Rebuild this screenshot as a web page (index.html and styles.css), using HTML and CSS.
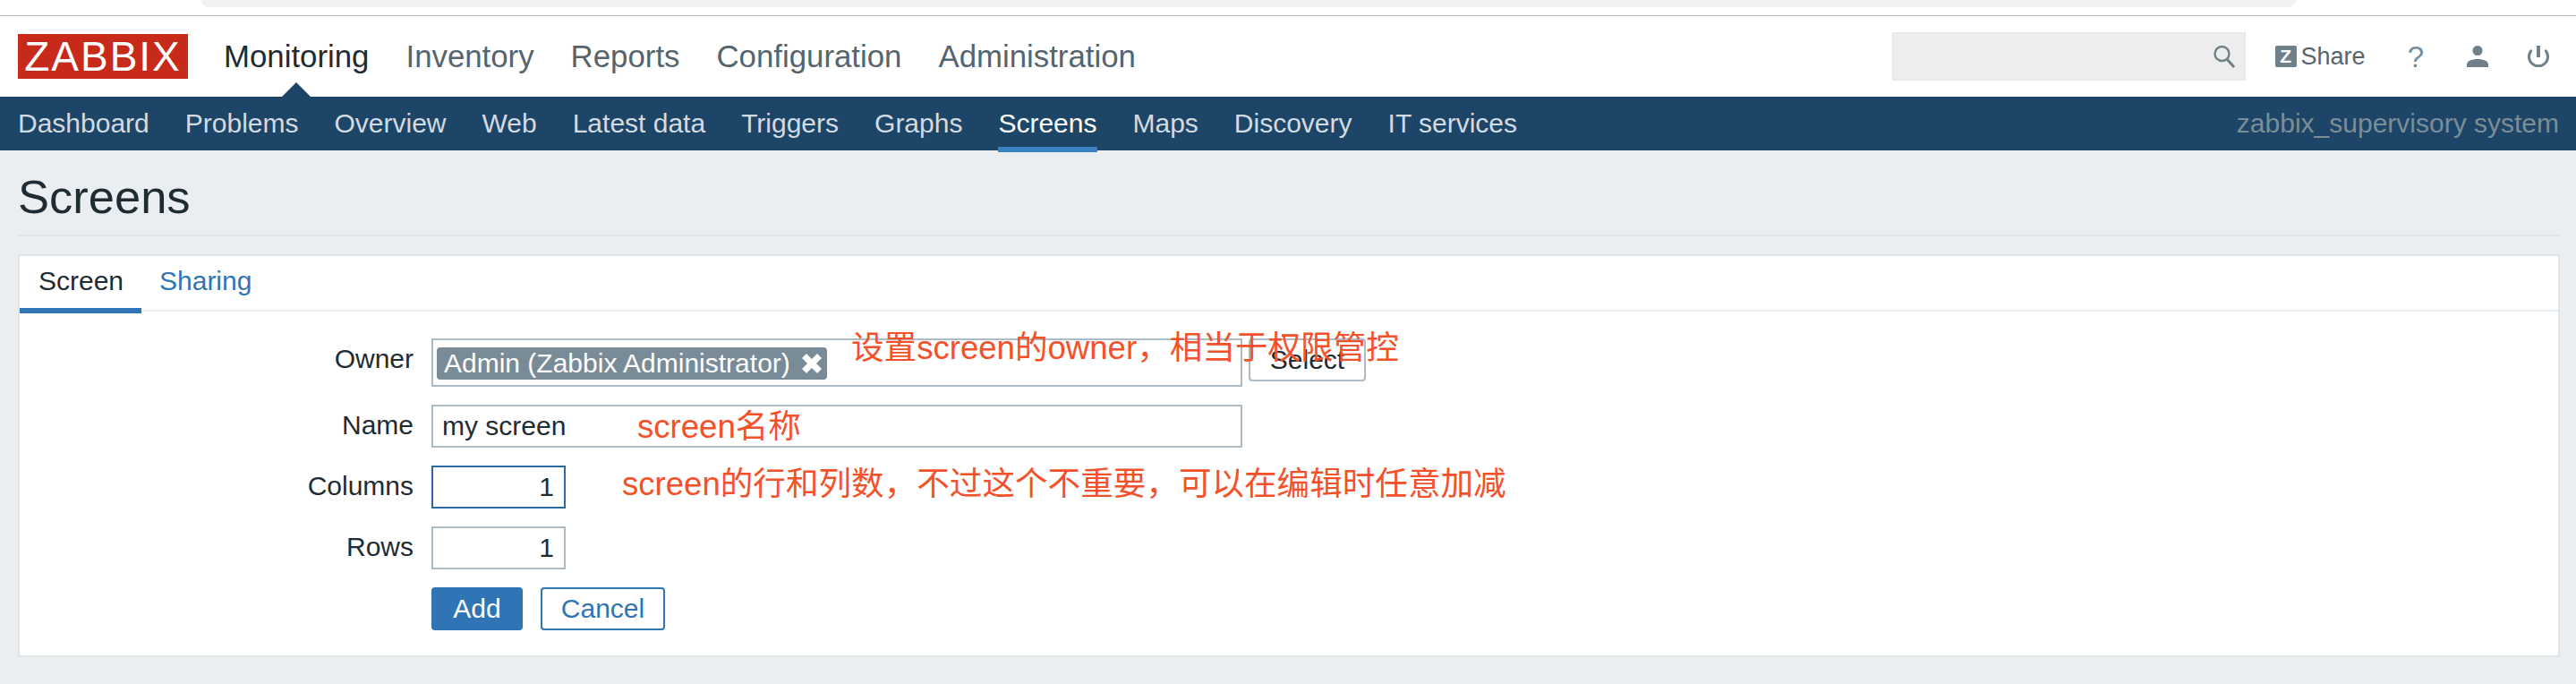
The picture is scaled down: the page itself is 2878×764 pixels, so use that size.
FILE: index.html
```html
<!DOCTYPE html>
<html lang="en">
<head>
    <meta charset="UTF-8">
    <meta name="viewport" content="width=device-width, initial-scale=1.0">
    <title>Screens</title>
    <link rel="stylesheet" href="styles.css">
</head>
<body>
<div class="browser-strip"><div class="browser-pill"></div></div>
<header class="top-bar">
    <a class="logo">ZABBIX</a>
    <nav class="main-nav">
        <a class="active">Monitoring</a>
        <a>Inventory</a>
        <a>Reports</a>
        <a>Configuration</a>
        <a>Administration</a>
    </nav>
    <div class="top-tools">
        <div class="search-box">
            <svg class="search-icon" width="26" height="26" viewBox="0 0 26 26">
                <circle cx="10.5" cy="10" r="8" fill="none" stroke="#6f808b" stroke-width="2.4"/>
                <path d="M16 16 L24 25" fill="none" stroke="#6f808b" stroke-width="3"/>
            </svg>
        </div>
        <a class="share-link">
            <span class="share-z">Z</span>
            <span>Share</span>
        </a>
        <a class="help-link">?</a>
        <svg class="tool-icon" width="24" height="24" viewBox="0 0 24 24">
            <circle cx="12" cy="5.5" r="5.5" fill="#6f808b"/>
            <path d="M0 24 V21 C0 17 6 15 12 15 C18 15 24 17 24 21 V24 Z" fill="#6f808b"/>
        </svg>
        <svg class="tool-icon" width="24" height="24" viewBox="0 0 24 24">
            <path d="M4.5 5 A10.5 10.5 0 1 0 19.5 5" fill="none" stroke="#6f808b" stroke-width="3"/>
            <path d="M12 0 V13" fill="none" stroke="#6f808b" stroke-width="4"/>
        </svg>
    </div>
</header>
<nav class="sub-nav">
    <a>Dashboard</a>
    <a>Problems</a>
    <a>Overview</a>
    <a>Web</a>
    <a>Latest data</a>
    <a>Triggers</a>
    <a>Graphs</a>
    <a class="active">Screens</a>
    <a>Maps</a>
    <a>Discovery</a>
    <a>IT services</a>
    <span class="server-name">zabbix_supervisory system</span>
</nav>
<main class="page">
    <div class="page-title"><h1>Screens</h1></div>
    <section class="card">
        <div class="tabs">
            <a class="tab active">Screen</a>
            <a class="tab">Sharing</a>
        </div>
        <form class="screen-form">
            <label>Owner</label>
            <div class="owner-row">
                <div class="multiselect">
                    <span class="tag">Admin (Zabbix Administrator)
                        <svg width="22" height="22" viewBox="0 0 22 22">
                            <path d="M2.5 2.5 L19.5 19.5 M19.5 2.5 L2.5 19.5" fill="none" stroke="#fff" stroke-width="7"/>
                        </svg>
                    </span>
                </div>
                <button type="button" class="btn-select">Select</button>
            </div>
            <label>Name</label>
            <input class="input-wide" type="text" value="my screen">
            <label>Columns</label>
            <input class="input-num focused" type="text" value="1">
            <label>Rows</label>
            <input class="input-num" type="text" value="1">
            <div class="form-buttons">
                <button type="button" class="btn-add">Add</button>
                <button type="button" class="btn-cancel">Cancel</button>
            </div>
        </form>
        <span class="note note-owner">设置screen的owner，相当于权限管控</span>
        <span class="note note-name">screen名称</span>
        <span class="note note-size">screen的行和列数，不过这个不重要，可以在编辑时任意加减</span>
    </section>
</main>
</body>
</html>
```

FILE: styles.css
```css
* {
    box-sizing: border-box;
}

body {
    font-family: "Liberation Sans", Arial, sans-serif;
    font-size: 30px;
    background-color: #ebeef0;
    color: #1f2c33;
    margin: 0;
    padding: 0;
}

.browser-strip {
    height: 18px;
    background-color: #fff;
    border-bottom: 1px solid #b8b8b8;
}

.browser-pill {
    height: 8px;
    margin: 0 313px 0 225px;
    background-color: #f1f2f4;
    border-radius: 0 0 16px 16px;
}

.top-bar {
    display: flex;
    align-items: center;
    height: 90px;
    padding: 0 30px 0 20px;
    background-color: #fff;
}

.logo {
    width: 190px;
    height: 50px;
    line-height: 50px;
    text-align: center;
    font-size: 46px;
    letter-spacing: 2px;
    color: #fff;
    background-color: #c7291b;
}

.main-nav {
    display: flex;
    gap: 41px;
    margin-left: 40px;
    font-size: 34.8px;
    color: #56646e;
}

.main-nav a {
    position: relative;
}

.main-nav a.active {
    color: #1f2c33;
}

.main-nav a.active::after {
    content: "";
    position: absolute;
    left: 50%;
    top: 49px;
    margin-left: -16px;
    border-left: 16px solid transparent;
    border-right: 16px solid transparent;
    border-bottom: 16px solid #1c4567;
}

.top-tools {
    display: flex;
    align-items: center;
    margin-left: auto;
}

.search-box {
    display: flex;
    align-items: center;
    justify-content: flex-end;
    width: 395px;
    height: 54px;
    padding-right: 9px;
    background-color: #ededed;
    border: 2px solid #e9e9e9;
}

.share-link {
    display: flex;
    align-items: center;
    gap: 5px;
    margin-left: 33px;
    font-size: 27px;
    color: #56646e;
}

.share-z {
    width: 24px;
    height: 24px;
    line-height: 24px;
    text-align: center;
    font-size: 21px;
    font-weight: bold;
    color: #fff;
    background-color: #6f808b;
    border-radius: 2px;
}

.help-link {
    margin-left: 47px;
    font-size: 33px;
    line-height: 33px;
    color: #768d99;
}

.tool-icon {
    margin-left: 48px;
}

.tool-icon:last-child {
    margin-left: 44px;
}

.sub-nav {
    display: flex;
    gap: 40px;
    height: 60px;
    padding: 0 19px 0 20px;
    line-height: 60px;
    color: #d3dbe2;
    background-color: #1c4567;
}

.sub-nav a.active {
    height: 62px;
    color: #fff;
    border-bottom: 6px solid #3a82c2;
}

.server-name {
    margin-left: auto;
    color: #7b8d97;
}

.page {
    padding: 0 18px 0 20px;
}

.page-title {
    height: 96px;
    border-bottom: 2px solid #dfe4e7;
}

.page-title h1 {
    margin: 0;
    font-size: 52.5px;
    font-weight: normal;
    line-height: 103px;
    color: #1f2c33;
}

.card {
    position: relative;
    height: 450px;
    margin-top: 20px;
    background-color: #fff;
    border: 2px solid #dfe4e7;
}

.tabs {
    display: flex;
    height: 62px;
    border-bottom: 2px solid #ebeef0;
}

.tab {
    height: 64px;
    padding: 0 21px;
    line-height: 56px;
    color: #2f75b5;
}

.tab + .tab {
    margin-left: -1px;
}

.tab.active {
    width: 136px;
    color: #1f2c33;
    border-bottom: 6px solid #2f75b5;
}

.screen-form {
    display: grid;
    grid-template-columns: 440px 1fr;
    column-gap: 20px;
    row-gap: 20px;
    padding-top: 30px;
}

.screen-form label {
    text-align: right;
    line-height: 46px;
}

.owner-row {
    display: flex;
    gap: 7px;
}

.multiselect {
    width: 906px;
    height: 54px;
    padding: 8px 4px;
    border: 2px solid #acbbc6;
}

.tag {
    display: inline-flex;
    align-items: center;
    justify-content: space-between;
    width: 436px;
    height: 36px;
    padding: 0 6px 0 8px;
    color: #fff;
    background-color: #7a8b98;
    border-radius: 4px;
}

input {
    height: 48px;
    font-family: inherit;
    font-size: 30px;
    color: #1f2c33;
    background-color: #fff;
    border: 2px solid #acbbc6;
    outline: none;
}

.input-wide {
    width: 906px;
    padding: 0 10px;
}

.input-num {
    width: 150px;
    padding: 0 11px;
    text-align: right;
}

.input-num.focused {
    border-color: #2b6aa5;
}

button {
    height: 48px;
    padding: 0;
    font-family: inherit;
    font-size: 30px;
    border-radius: 4px;
}

.btn-select {
    width: 131px;
    color: #1f2c33;
    background-color: #fff;
    border: 2px solid #acbbc6;
}

.form-buttons {
    grid-column: 2;
    display: flex;
    gap: 20px;
}

.btn-add {
    width: 102px;
    color: #fff;
    background-color: #2f75b5;
    border: 2px solid #2f75b5;
}

.btn-cancel {
    width: 139px;
    color: #2f75b5;
    background-color: #fff;
    border: 2px solid #2f75b5;
}

/* red annotations drawn on top of the form */
.note {
    position: absolute;
    font-family: "Liberation Sans", "Noto Sans CJK SC", sans-serif;
    font-size: 36.6px;
    line-height: 36px;
    white-space: nowrap;
    color: #f4512a;
}

.note-owner {
    left: 929px;
    top: 85px;
}

.note-name {
    left: 690px;
    top: 173px;
}

.note-size {
    left: 673px;
    top: 237px;
}
```
